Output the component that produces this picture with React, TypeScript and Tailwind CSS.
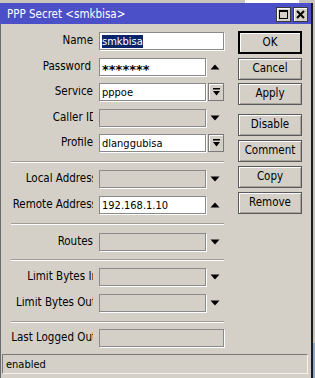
import React from 'react';

type Trail = 'up' | 'down' | 'drop' | 'none';

interface FieldRow {
  label: string;
  clip: string; // negative right margin so long labels get cut at the edge
  value?: string;
  selected?: boolean;
  secret?: boolean;
  disabled?: boolean;
  wide?: boolean;
  trail: Trail;
  mt: string;
}

const UpArrow = () => (
  <svg width="10" height="6" viewBox="0 0 10 6" className="block">
    <path d="M0.5 5.5 L5 0.5 L9.5 5.5 Z" fill="#000" />
  </svg>
);

const DownArrow = () => (
  <svg width="10" height="6" viewBox="0 0 10 6" className="block">
    <path d="M0.5 0.5 L9.5 0.5 L5 5.5 Z" fill="#000" />
  </svg>
);

const DropButton = () => (
  <div className="ml-[2px] flex h-[18px] w-[16px] items-center justify-center border border-[#7a7a7a] bg-[#d4d0c8] shadow-[inset_1px_1px_0_#fff]">
    <svg width="7" height="8" viewBox="0 0 7 8" className="block">
      <rect x="0" y="0" width="7" height="1.5" fill="#000" />
      <path d="M0 3 L7 3 L3.5 7.5 Z" fill="#000" />
    </svg>
  </div>
);

const rows: FieldRow[] = [
  { label: 'Name', clip: 'mr-0', value: 'smkbisa', selected: true, wide: true, trail: 'none', mt: 'mt-[8px]' },
  { label: 'Password', clip: 'mr-[2px]', value: '*******', secret: true, trail: 'up', mt: 'mt-[8px]' },
  { label: 'Service', clip: 'mr-0', value: 'pppoe', trail: 'drop', mt: 'mt-[7px]' },
  { label: 'Caller ID', clip: '-mr-[4px]', disabled: true, trail: 'down', mt: 'mt-[8px]' },
  { label: 'Profile', clip: 'mr-0', value: 'dlanggubisa', trail: 'drop', mt: 'mt-[7px]' },
];

const rows2: FieldRow[] = [
  { label: 'Local Address', clip: '-mr-[4px]', disabled: true, trail: 'down', mt: 'mt-[7px]' },
  { label: 'Remote Address', clip: '-mr-[4px]', value: '192.168.1.10', trail: 'up', mt: 'mt-[8px]' },
];

const rows3: FieldRow[] = [
  { label: 'Routes', clip: 'mr-0', disabled: true, trail: 'down', mt: 'mt-[8px]' },
];

const rows4: FieldRow[] = [
  { label: 'Limit Bytes In', clip: '-mr-[5px]', disabled: true, trail: 'down', mt: 'mt-[7px]' },
  { label: 'Limit Bytes Out', clip: '-mr-[3px]', disabled: true, trail: 'down', mt: 'mt-[8px]' },
];

const rows5: FieldRow[] = [
  { label: 'Last Logged Out', clip: '-mr-[3px]', disabled: true, wide: true, trail: 'none', mt: 'mt-[6px]' },
];

const Row: React.FC<{ row: FieldRow }> = ({ row }) => (
  <div className={`flex h-[18px] items-center ${row.mt}`}>
    <div className="flex w-[92px] shrink-0 justify-end overflow-hidden whitespace-nowrap text-[11.5px]">
      <span className={row.clip}>{row.label}</span>
    </div>
    <div
      className={`ml-[6px] flex h-[18px] items-center overflow-hidden whitespace-nowrap border border-[#8a8a8a] pl-[2px] shadow-[1px_1px_0_#fff] ${
        row.wide ? 'w-[125px]' : 'w-[107px]'
      } ${row.disabled ? 'bg-[#d4d0c8]' : 'bg-white'}`}
    >
      {row.selected ? (
        <span className="bg-[#0a246a] py-[1px] text-white">{row.value}</span>
      ) : row.secret ? (
        <span className="mt-[4px] text-[13px] font-bold" style={{ fontStretch: 'normal', fontFamily: '"DejaVu Sans", sans-serif' }}>
          {row.value}
        </span>
      ) : (
        <span>{row.value}</span>
      )}
    </div>
    {row.trail === 'up' && (
      <div className="flex w-[18px] justify-center">
        <UpArrow />
      </div>
    )}
    {row.trail === 'down' && (
      <div className="flex w-[18px] justify-center">
        <DownArrow />
      </div>
    )}
    {row.trail === 'drop' && <DropButton />}
  </div>
);

const Separator: React.FC<{ mt: string }> = ({ mt }) => (
  <div className={`ml-[10px] w-[213px] border-t border-b border-t-[#a09c94] border-b-white ${mt}`} />
);

const buttons = [
  { text: 'OK', mt: 'mt-[7px]', def: true },
  { text: 'Cancel', mt: 'mt-[4px]' },
  { text: 'Apply', mt: 'mt-[3px]' },
  { text: 'Disable', mt: 'mt-[9px]' },
  { text: 'Comment', mt: 'mt-[4px]' },
  { text: 'Copy', mt: 'mt-[4px]' },
  { text: 'Remove', mt: 'mt-[4px]' },
];

export default function App() {
  return (
    <div
      className="relative h-[378px] w-[315px] overflow-hidden bg-[#c9c5bd] text-[11px] leading-none text-black"
      style={{ fontFamily: '"DejaVu Sans Condensed", "DejaVu Sans", sans-serif', fontStretch: 'condensed' }}
    >
      {/* bits of the window behind */}
      <div className="absolute left-[245px] top-0 h-[3px] w-[54px] bg-white" />
      <div className="absolute right-0 top-[343px] h-[35px] w-[2px] bg-[#8fa8c8]" />

      <div className="mt-[3px] flex h-[375px] w-[313px] flex-col border-r-2 border-r-[#1c1c1c] bg-[#d4d0c8]">
        {/* title bar */}
        <div className="flex h-[21px] shrink-0 items-start bg-[#4c50c8] pl-[7px] pr-[3px]">
          <span className="mt-[6px] text-[11.5px] text-white">PPP Secret &lt;smkbisa&gt;</span>
          <div className="ml-auto mt-[4px] flex gap-[2px]">
            <div className="flex h-[15px] w-[15px] items-center justify-center border border-[#3a3a3a] bg-[#d4d0c8] shadow-[inset_1px_1px_0_#fff]">
              <div className="h-[9px] w-[9px] border border-t-2 border-black" />
            </div>
            <div className="flex h-[15px] w-[15px] items-center justify-center border border-[#3a3a3a] bg-[#d4d0c8] shadow-[inset_1px_1px_0_#fff]">
              <svg width="9" height="9" viewBox="0 0 9 9" className="block">
                <path d="M1 1 L8 8 M8 1 L1 8" stroke="#000" strokeWidth="2" />
              </svg>
            </div>
          </div>
        </div>

        {/* body */}
        <div className="flex flex-1 flex-col border-l border-l-[#6a6a6a]">
          <div className="flex">
            <div className="flex w-[237px] flex-col">
              {rows.map((r) => (
                <Row key={r.label} row={r} />
              ))}
              <Separator mt="mt-[9px]" />
              {rows2.map((r) => (
                <Row key={r.label} row={r} />
              ))}
              <Separator mt="mt-[9px]" />
              {rows3.map((r) => (
                <Row key={r.label} row={r} />
              ))}
              <Separator mt="mt-[8px]" />
              {rows4.map((r) => (
                <Row key={r.label} row={r} />
              ))}
              <Separator mt="mt-[9px]" />
              {rows5.map((r) => (
                <Row key={r.label} row={r} />
              ))}
            </div>

            <div className="flex w-[64px] flex-col text-[11.5px]">
              {buttons.map((b) => (
                <div
                  key={b.text}
                  className={`flex w-[64px] items-center justify-center bg-[#d4d0c8] ${b.mt} ${
                    b.def
                      ? 'h-[23px] border-2 border-black shadow-[inset_1px_1px_0_#fff]'
                      : 'h-[22px] border border-[#5a5a5a] shadow-[inset_1px_1px_0_#fff,inset_-1px_-1px_0_#a8a49c]'
                  }`}
                >
                  {b.text}
                </div>
              ))}
            </div>
          </div>

          {/* status bar */}
          <div className="ml-[1px] mt-[7px] flex h-[20px] w-[306px] items-center border border-t-[#7a7a7a] border-l-[#7a7a7a] border-b-[#f4f2ee] border-r-[#f4f2ee] pl-[3px]">
            enabled
          </div>
        </div>
      </div>
    </div>
  );
}
